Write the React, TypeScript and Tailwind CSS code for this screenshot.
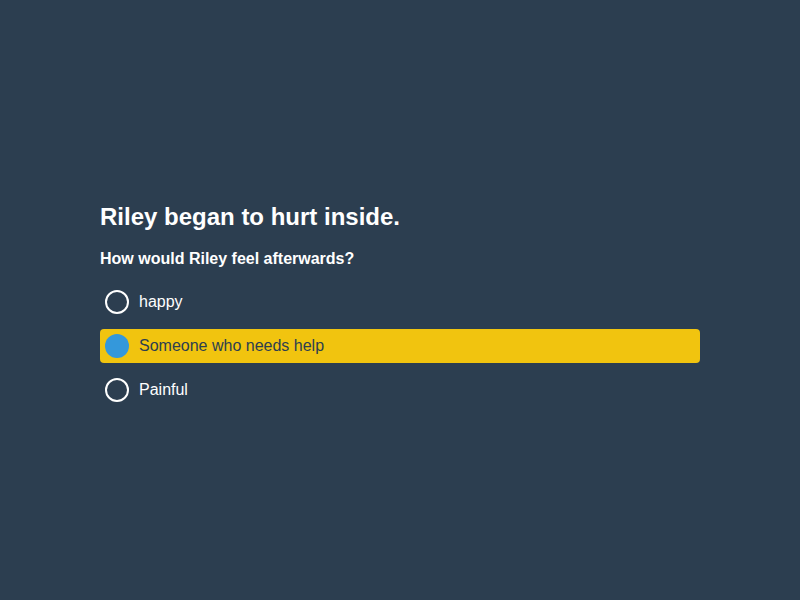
import React from "react";

const options = ["happy", "Someone who needs help", "Painful"];
const selected = 1;

export default function App() {
  return (
    <div className="w-[800px] h-[600px] bg-[#2c3e50] flex flex-col justify-center px-[100px] pt-[10px] font-['Liberation_Sans',Arial,sans-serif] text-white">
      <h1 className="text-[24px] font-bold leading-[28px] mb-[18px]">Riley began to hurt inside.</h1>
      <h2 className="text-[16px] font-bold leading-[20px] mb-[16px]">How would Riley feel afterwards?</h2>
      <div className="flex flex-col gap-[10px]">
        {options.map((o, i) => {
          const sel = i === selected;
          return (
            <div
              key={o}
              className={
                "flex items-center gap-[10px] h-[34px] px-[5px] rounded-[4px] " +
                (sel ? "bg-[#f1c40f] text-[#2c3e50]" : "")
              }
            >
              {sel ? (
                <span className="w-[24px] h-[24px] rounded-full bg-[#3498db]" />
              ) : (
                <span className="w-[24px] h-[24px] rounded-full border-2 border-white" />
              )}
              <span className="text-[16px]">{o}</span>
            </div>
          );
        })}
      </div>
    </div>
  );
}
